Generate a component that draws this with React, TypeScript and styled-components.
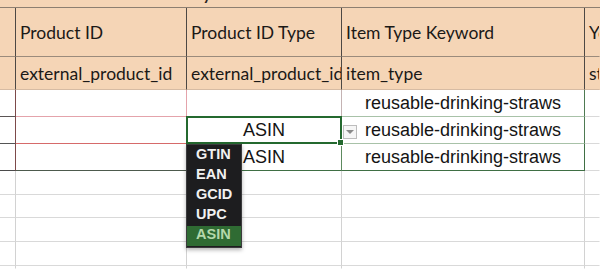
import React from 'react';
import styled, { createGlobalStyle } from 'styled-components';

const GlobalStyle = createGlobalStyle`
  html, body {
    margin: 0;
    padding: 0;
    background: #fff;
    overflow: hidden;
  }
`;

const TAN = '#f5d5b6';
const GRID = '#d9d9d9';

const Sheet = styled.div`
  display: grid;
  grid-template-columns: 16px 171px 155px 243px 1fr;
  grid-template-rows: 8px 49px 33px 27px 27px 27px 24px 23px 24px 24px 1fr;
  width: 600px;
  height: 269px;
  overflow: hidden;
  background: #fff;
`;

interface CellProps {
  $bg?: string;
  $right?: string;
  $bottom?: string;
  $center?: boolean;
}

const Cell = styled.div<CellProps>`
  box-sizing: border-box;
  min-width: 0;
  display: flex;
  align-items: center;
  justify-content: ${({ $center }) => ($center ? 'center' : 'flex-start')};
  padding: 0 4px;
  background: ${({ $bg }) => $bg ?? '#fff'};
  border-right: 1px solid ${({ $right }) => $right ?? GRID};
  border-bottom: 1px solid ${({ $bottom }) => $bottom ?? GRID};
  white-space: nowrap;
  overflow: hidden;
`;

const Strip = styled.div`
  grid-column: 1 / -1;
  box-sizing: border-box;
  background: ${TAN};
  border-bottom: 1px solid #8d7f71;
  overflow: hidden;
  padding-left: 95px;
`;

const StripText = styled.span`
  display: block;
  line-height: 20px;
  transform: translateY(-16px);
  font: bold 16px Lato, "Liberation Sans", sans-serif;
  color: #2a2420;
  white-space: nowrap;
`;

const HeadText = styled.span`
  font: 17.5px Lato, "Liberation Sans", sans-serif;
  color: #1b1916;
`;

const DataText = styled.span`
  font: 18px "Liberation Sans", Arial, sans-serif;
  color: #141414;
`;

const Selected = styled(Cell)`
  position: relative;
  overflow: visible;
`;

const SelectionFrame = styled.div`
  position: absolute;
  inset: -1px;
  border: 2px solid #24692f;
  pointer-events: none;
  z-index: 2;
`;

const FillHandle = styled.div`
  position: absolute;
  right: -4px;
  bottom: -4px;
  width: 5px;
  height: 5px;
  background: #24692f;
  border: 1px solid #fff;
`;

const ArrowButton = styled.div`
  position: absolute;
  left: calc(100% + 2px);
  top: 8px;
  width: 14px;
  height: 14px;
  box-sizing: border-box;
  background: #f6f6f6;
  border: 1px solid #bdbdbd;
  display: flex;
  align-items: center;
  justify-content: center;
  z-index: 2;

  &::after {
    content: '';
    border-left: 4px solid transparent;
    border-right: 4px solid transparent;
    border-top: 4px solid #8a8a8a;
  }
`;

const Menu = styled.ul`
  position: absolute;
  left: -1px;
  top: 27px;
  width: 56px;
  box-sizing: border-box;
  margin: 0;
  padding: 1px 0;
  list-style: none;
  background: #1d1d1f;
  border: 1px solid #3b3b3d;
  box-shadow: 0 2px 4px rgba(0, 0, 0, 0.3);
  z-index: 3;
`;

const MenuItem = styled.li<{ $active?: boolean }>`
  height: 20px;
  line-height: 20px;
  padding-left: 9px;
  font: bold 14.5px "Liberation Sans", Arial, sans-serif;
  color: ${({ $active }) => ($active ? '#b5d8ab' : '#f1f1f1')};
  background: ${({ $active }) => ($active ? '#2f6b33' : 'transparent')};
`;

const headers = ['Product ID', 'Product ID Type', 'Item Type Keyword', 'Your Price'];
const fields = ['external_product_id', 'external_product_id_type', 'item_type', 'standard_price'];
const options = ['GTIN', 'EAN', 'GCID', 'UPC', 'ASIN'];
const keyword = 'reusable-drinking-straws';

const App: React.FC = () => {
  return (
    <>
      <GlobalStyle />
      <Sheet>
        <Strip>
          <StripText>Product Identity - These attributes</StripText>
        </Strip>

        <Cell $bg={TAN} $right="#4d4844" $bottom="#9b8b7c" />
        {headers.map((h, i) => (
          <Cell key={h} $bg={TAN} $right={i === 3 ? 'transparent' : '#4d4844'} $bottom="#9b8b7c">
            <HeadText>{h}</HeadText>
          </Cell>
        ))}

        <Cell $bg={TAN} $right="#4d4844" $bottom="#d6bba3" />
        {fields.map((f, i) => (
          <Cell key={f} $bg={TAN} $right={i === 3 ? 'transparent' : '#4d4844'} $bottom="#d6bba3">
            <HeadText>{f}</HeadText>
          </Cell>
        ))}

        {/* row 3 */}
        <Cell $right="#7d4a4a" $bottom="#5b5555" />
        <Cell $right="#e4a3ab" $bottom="#e4a3ab" />
        <Cell $right="#c4b3b3" $bottom="#2f6b36" />
        <Cell $center $right="#4e7a52" $bottom="#a8c2a8">
          <DataText>{keyword}</DataText>
        </Cell>
        <Cell $right="transparent" />

        {/* row 4 */}
        <Cell $right="#7d4a4a" $bottom="#555555" />
        <Cell $right="#e4a3ab" $bottom="#d66a6a" />
        <Selected $center $right="#5d8a5f" $bottom="#5d8a5f">
          <DataText>ASIN</DataText>
          <SelectionFrame>
            <FillHandle />
          </SelectionFrame>
          <ArrowButton />
          <Menu>
            {options.map((o) => (
              <MenuItem key={o} $active={o === 'ASIN'}>
                {o}
              </MenuItem>
            ))}
          </Menu>
        </Selected>
        <Cell $center $right="#4e7a52" $bottom="#a8c2a8">
          <DataText>{keyword}</DataText>
        </Cell>
        <Cell $right="transparent" />

        {/* row 5 */}
        <Cell $right="#7d4a4a" $bottom="#4b4b4b" />
        <Cell $right="#e4a3ab" $bottom="#4d5a4d" />
        <Cell $center $right="#5d8a5f" $bottom="#3f6f44">
          <DataText>ASIN</DataText>
        </Cell>
        <Cell $center $right="#3f6f44" $bottom="#3f6f44">
          <DataText>{keyword}</DataText>
        </Cell>
        <Cell $right="transparent" />

        {Array.from({ length: 5 }).map((_, r) =>
          Array.from({ length: 5 }).map((__, c) => (
            <Cell
              key={`e-${r}-${c}`}
              $right={c === 4 ? 'transparent' : '#d2d2d2'}
              $bottom={r === 4 ? 'transparent' : GRID}
            />
          ))
        )}
      </Sheet>
    </>
  );
};

export default App;
